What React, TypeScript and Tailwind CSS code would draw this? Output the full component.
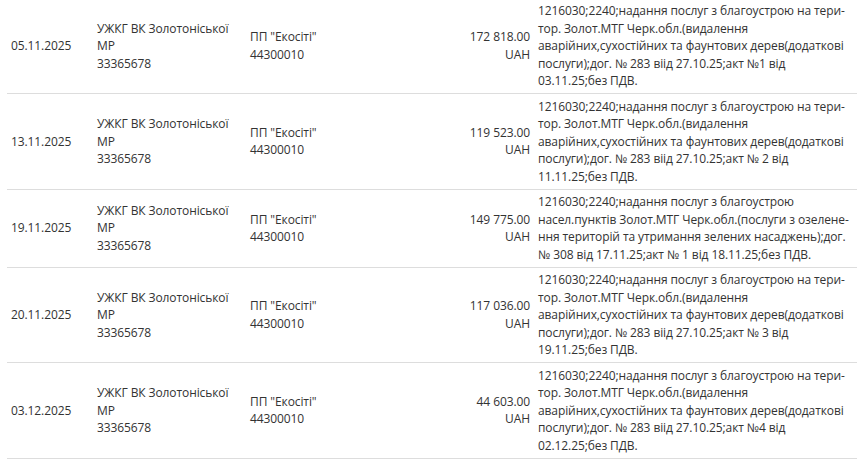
const rows = [
  {
    date: '05.11.2025',
    amount: '172 818.00',
    desc: '1216030;2240;надання послуг з благоустрою на тери\u00ADтор. Золот.МТГ Черк.обл.(видалення аварійних,сухостійних та фаунтових дерев(додаткові послуги);дог. № 283 віід 27.10.25;акт №1 від 03.11.25;без ПДВ.',
  },
  {
    date: '13.11.2025',
    amount: '119 523.00',
    desc: '1216030;2240;надання послуг з благоустрою на тери\u00ADтор. Золот.МТГ Черк.обл.(видалення аварійних,сухостійних та фаунтових дерев(додаткові послуги);дог. № 283 віід 27.10.25;акт № 2 від 11.11.25;без ПДВ.',
  },
  {
    date: '19.11.2025',
    amount: '149 775.00',
    desc: '1216030;2240;надання послуг з благоустрою насел.пунктів Золот.МТГ Черк.обл.(послуги з озелене\u00ADння територій та утримання зелених насаджень);дог. № 308 від 17.11.25;акт № 1 від 18.11.25;без ПДВ.',
  },
  {
    date: '20.11.2025',
    amount: '117 036.00',
    desc: '1216030;2240;надання послуг з благоустрою на тери\u00ADтор. Золот.МТГ Черк.обл.(видалення аварійних,сухостійних та фаунтових дерев(додаткові послуги);дог. № 283 віід 27.10.25;акт № 3 від 19.11.25;без ПДВ.',
  },
  {
    date: '03.12.2025',
    amount: '44 603.00',
    desc: '1216030;2240;надання послуг з благоустрою на тери\u00ADтор. Золот.МТГ Черк.обл.(видалення аварійних,сухостійних та фаунтових дерев(додаткові послуги);дог. № 283 віід 27.10.25;акт №4 від 02.12.25;без ПДВ.',
  },
]

export default function App() {
  return (
    <div className="w-[857px] h-[462px] overflow-hidden bg-white pl-[7px] text-[12px] leading-[17.5px] tracking-[-0.1px] text-[#333] font-['Open_Sans',sans-serif]">
      <div className="-mt-[1.5px]">
        {rows.map((r) => (
          <div
            key={r.date}
            className="grid grid-cols-[86px_153px_140px_148px_323px] items-center border-b border-[#ddd]"
          >
            <div className="px-[4px] py-[3.5px]">{r.date}</div>
            <div className="px-[4px] py-[3.5px]">
              УЖКГ ВК Золотоніської МР
              <br />
              33365678
            </div>
            <div className="px-[4px] py-[3.5px]">
              ПП "Екосіті"
              <br />
              44300010
            </div>
            <div className="px-[4px] py-[3.5px] text-right">
              {r.amount}
              <br />
              UAH
            </div>
            <div className="px-[4px] py-[3.5px]" lang="uk">
              {r.desc}
            </div>
          </div>
        ))}
      </div>
    </div>
  )
}
